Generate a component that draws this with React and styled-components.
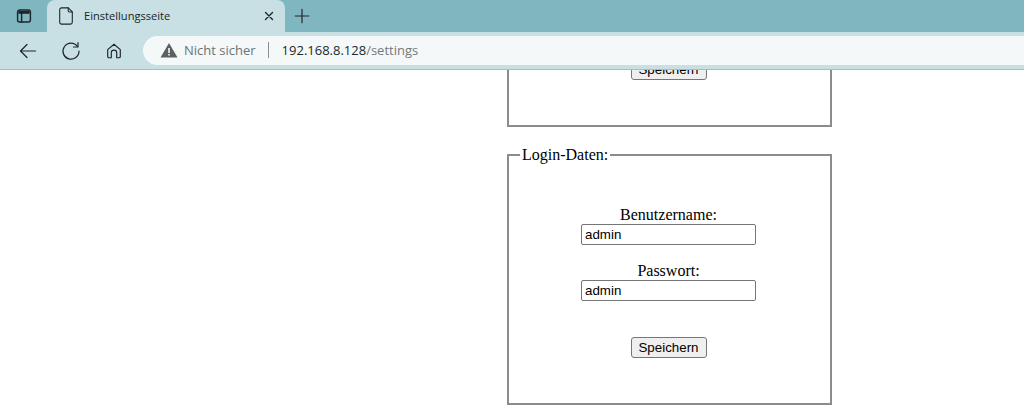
import React from 'react'
import styled, { createGlobalStyle } from 'styled-components'

const Global = createGlobalStyle`
  html, body {
    margin: 0;
    padding: 0;
    background: white;
    overflow: hidden;
  }
`

const Window = styled.div`
  width: 1024px;
  height: 420px;
  display: flex;
  flex-direction: column;
  overflow: hidden;
`

const TabBar = styled.div`
  height: 32px;
  flex: none;
  display: flex;
  align-items: stretch;
  background-color: #7fb6bf;
`

const WorkspaceButton = styled.div`
  width: 47px;
  display: flex;
  align-items: center;
  justify-content: center;
  padding-left: 1px;
  box-sizing: border-box;
`

const Tab = styled.div`
  width: 238px;
  display: flex;
  align-items: center;
  padding: 0 9px 0 10px;
  box-sizing: border-box;
  background-color: #c8dfe4;
  border-radius: 8px 8px 0 0;
  font: 11.1px "Open Sans", sans-serif;
  color: #1c2426;
`

const TabTitle = styled.span`
  flex: 1;
  margin-left: 9px;
  margin-top: -1px;
`

const NewTab = styled.div`
  width: 32px;
  margin-left: 1px;
  display: flex;
  align-items: center;
  justify-content: center;
`

const Toolbar = styled.div`
  height: 37px;
  flex: none;
  display: flex;
  align-items: center;
  background-color: #c8dfe4;
  border-bottom: 1px solid #a9bec3;
`

const NavButton = styled.div`
  width: 43px;
  flex: none;
  display: flex;
  align-items: center;
  justify-content: center;
`

const NavGroup = styled.div`
  width: 143px;
  flex: none;
  display: flex;
  padding-left: 6px;
  box-sizing: border-box;
`

const AddressBar = styled.div`
  flex: 1;
  height: 29px;
  margin-top: -1px;
  display: flex;
  align-items: center;
  padding-left: 17px;
  background-color: #f4f8f9;
  border-radius: 15px 0 0 15px;
  font: 13px "Open Sans", sans-serif;
`

const Security = styled.span`
  margin-left: 6px;
  color: #6d7375;
`

const Divider = styled.span`
  width: 1px;
  height: 16px;
  margin: 0 13px 0 12px;
  background-color: #8a9091;
`

const Host = styled.span`
  color: #20282b;
`

const UrlPath = styled.span`
  color: #74797b;
`

const Page = styled.main`
  flex: 1;
  min-height: 0;
  display: flex;
  flex-direction: column;
  justify-content: flex-end;
  align-items: flex-start;
  gap: 19px;
  padding: 0 0 15px 507px;
  overflow: hidden;
  background: white;
  font: 16px/18px "Liberation Serif", "Times New Roman", serif;
  color: black;
`

const Box = styled.fieldset`
  width: 325px;
  flex: none;
  box-sizing: border-box;
  margin: 0;
  padding: 0 2px 45px 0;
  border: 2px solid #8c8c8c;
  display: flex;
  flex-direction: column;
  align-items: center;
`

const BoxTitle = styled.legend`
  padding: 0 2px;
  margin-left: 11px;
`

const Field = styled.label`
  display: flex;
  flex-direction: column;
  align-items: center;
  margin-bottom: 17px;

  &:first-of-type {
    margin-top: 42px;
  }
`

const TextInput = styled.input`
  width: 175px;
  height: 21px;
  box-sizing: border-box;
  padding: 1px 3px;
  border: 1px solid #767676;
  border-radius: 2px;
  font: 13.33px "Liberation Sans", Arial, sans-serif;
  color: black;
  background: white;
`

const SaveButton = styled.button`
  width: 76px;
  height: 21px;
  padding: 0;
  margin-top: 19px;
  box-sizing: border-box;
  border: 1px solid #767676;
  border-radius: 3px;
  background-color: #efefef;
  font: 13.33px "Liberation Sans", Arial, sans-serif;
  color: black;
`

const Icon = ({ size = 20, children, width = 1.5 }) => (
  <svg width={size} height={size} viewBox="0 0 20 20" fill="none" stroke="#1f2628"
    strokeWidth={width} strokeLinecap="round" strokeLinejoin="round">
    {children}
  </svg>
)

const App = () => (
  <Window>
    <Global />
    <TabBar>
      <WorkspaceButton>
        <Icon size={16} width={1.8}>
          <rect x="2" y="2.500" width="16" height="15" rx="2.500" />
          <path d="M3 5.500h14" strokeWidth="3.500" strokeLinecap="butt" />
          <path d="M7 6.500v11" />
        </Icon>
      </WorkspaceButton>
      <Tab>
        <Icon size={18} width={1.2}>
          <path d="M3 3a2 2 0 0 1 2-2h7.500l4.500 4.500V17a2 2 0 0 1-2 2H5a2 2 0 0 1-2-2z" />
          <path d="M12.500 1v3.500a1 1 0 0 0 1 1H17" />
        </Icon>
        <TabTitle>Einstellungsseite</TabTitle>
        <Icon size={14} width={2}>
          <path d="M5 5l10 10M15 5L5 15" />
        </Icon>
      </Tab>
      <NewTab>
        <Icon size={18} width={1.3}>
          <path d="M10 2.500v15M2.500 10h15" />
        </Icon>
      </NewTab>
    </TabBar>
    <Toolbar>
      <NavGroup>
        <NavButton>
          <Icon size={20} width={1.2}>
            <path d="M17.500 10H3M9 3.500L2.500 10 9 16.500" />
          </Icon>
        </NavButton>
        <NavButton>
          <Icon size={20} width={1.2}>
            <path d="M16.500 5.500A8 8 0 1 0 18 10" />
            <path d="M17 1.500v4.500h-4.500" />
          </Icon>
        </NavButton>
        <NavButton>
          <Icon size={18} width={1.3}>
            <path d="M3 8.500L10 2.500l7 6v7.500a1.500 1.500 0 0 1-1.500 1.500H13v-5.500a3 3 0 0 0-6 0v5.500H4.500A1.500 1.500 0 0 1 3 16z" />
          </Icon>
        </NavButton>
      </NavGroup>
      <AddressBar>
        <svg width="18" height="16" viewBox="0 0 18 16">
          <path d="M9 1L17.500 15.500H.5z" fill="#5b6163" />
          <path d="M8.200 6h1.600v5H8.200zM8.200 12h1.600v1.600H8.200z" fill="#f4f8f9" />
        </svg>
        <Security>Nicht sicher</Security>
        <Divider />
        <Host>192.168.8.128</Host>
        <UrlPath>/settings</UrlPath>
      </AddressBar>
    </Toolbar>
    <Page>
      <Box>
        <SaveButton type="button">Speichern</SaveButton>
      </Box>
      <Box>
        <BoxTitle>Login-Daten:</BoxTitle>
        <Field>
          Benutzername:
          <TextInput defaultValue="admin" />
        </Field>
        <Field>
          Passwort:
          <TextInput defaultValue="admin" />
        </Field>
        <SaveButton type="button">Speichern</SaveButton>
      </Box>
    </Page>
  </Window>
)

export default App
